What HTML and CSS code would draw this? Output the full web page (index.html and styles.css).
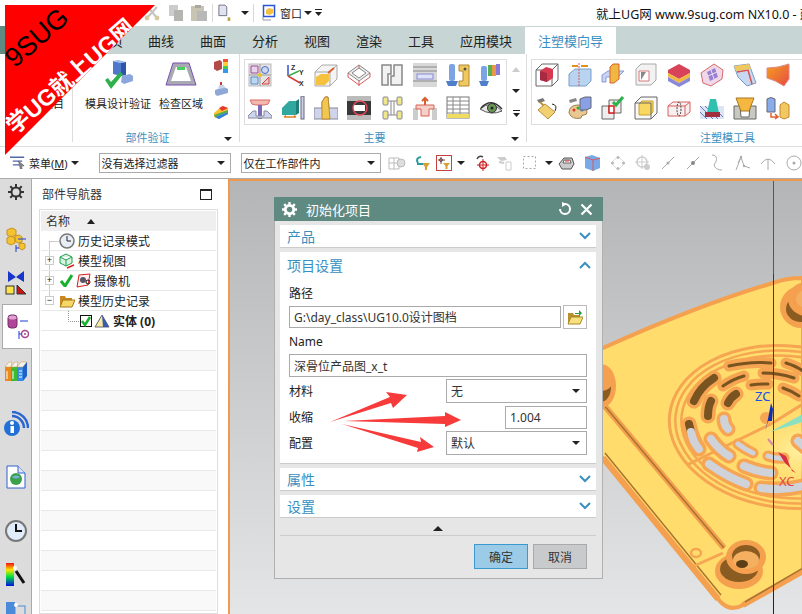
FILE: index.html
```html
<!DOCTYPE html>
<html lang="zh">
<head>
<meta charset="UTF-8">
<title>NX10.0</title>
<link rel="stylesheet" href="styles.css">
</head>
<body>
<div class="app">

<!-- quick access bar -->
<div class="topbar">
	<div class="quick">
		<svg class="qi scissors" width="18" height="18" viewBox="0 0 18 18"><path d="M3 15 14 3M5 3l9 11" stroke="#c4c4c0" stroke-width="2" fill="none"/><circle cx="4" cy="14" r="2.4" fill="#d8c8a0"/><circle cx="14" cy="14" r="2.4" fill="#d8c8a0"/></svg>
		<svg class="qi copy" width="16" height="18" viewBox="0 0 16 18"><rect x="1" y="1" width="9" height="11" fill="#ccc"/><rect x="6" y="6" width="9" height="11" fill="#b4b4b0"/></svg>
		<svg class="qi paste" width="18" height="18" viewBox="0 0 18 18"><rect x="1" y="2" width="13" height="15" fill="#c8c4b4"/><rect x="5" y="1" width="6" height="3" fill="#a8a8a0"/><rect x="7" y="7" width="10" height="10" fill="#b8b8b8"/></svg>
		<i class="qsep"></i>
		<svg class="qi doc" width="14" height="20" viewBox="0 0 16 20"><path d="M1 1h7l2 2v10H1z" fill="#dfe4f0" stroke="#667"/><path d="M11 15h3v4h-3z" fill="#b9a23c"/></svg>
		<i class="arrow dn"></i>
		<i class="qsep"></i>
		<svg class="qi win" width="18" height="18" viewBox="0 0 18 18"><rect x="2.500" y="1.500" width="11" height="11" fill="#fff" stroke="#2a55d8" stroke-width="1.500"/><path d="M5 6l3-2 4 1v4l-3 2-4-1z" fill="#f4c040"/><path d="M2 13v3h8" stroke="#999" fill="none"/></svg>
		<span class="qtext">窗口</span>
		<i class="arrow dn"></i>
		<svg class="qi more" width="7" height="8" viewBox="0 0 7 8"><path d="M0 0h7v1H0zM0 3h7L3.500 7z" fill="#222"/></svg>
	</div>
	<div class="apptitle">就上UG网 www.9sug.com NX10.0 - 建模</div>
</div>

<!-- ribbon tabs -->
<div class="tabs">
	<span class="tab tab-file"></span>
	<span class="tab tab-hidden">主页</span>
	<span class="tab">曲线</span>
	<span class="tab">曲面</span>
	<span class="tab">分析</span>
	<span class="tab">视图</span>
	<span class="tab">渲染</span>
	<span class="tab">工具</span>
	<span class="tab tab-apps">应用模块</span>
	<span class="tab active">注塑模向导</span>
</div>

<!-- ribbon -->
<div class="ribbon">
	<div class="rgroup rg-first">
		<div class="rbig-cut">初始化项目</div>
	</div>
	<div class="rgroup rg-check">
		<div class="rcontent">
			<div class="rbig">
				<svg width="32" height="32" viewBox="0 0 32 32"><path d="M11 2l8 2v13l-8-2z" fill="#4f78cc"/><path d="M11 2l5-1 8 2-5 1z" fill="#9ab8ea"/><path d="M19 4l5-1v13l-5 1z" fill="#2f55a8"/><path d="M20 17l8-2 3 2v5l-9 3-3-2z" fill="#8aa6dc"/><path d="M3 21l3-2 3 4L18 13l3 2L9 30z" fill="#2eb14a"/></svg>
				<span>模具设计验证</span>
			</div>
			<div class="rbig">
				<svg width="32" height="32" viewBox="0 0 32 32"><path d="M8 4h16l7 22H1z" fill="#a9a9b4" stroke="#7a4fb0"/><path d="M11 8h10l5 14H6z" fill="#fff"/><path d="M12 8h8v3h-8z" fill="#46d15a"/></svg>
				<span>检查区域</span>
			</div>
			<div class="rsmall">
				<svg width="16" height="16" viewBox="0 0 16 16"><path d="M1 4l6-2 2 2v7l-5 2-3-2z" fill="#b34a4a"/><rect x="10" y="1" width="5" height="3" fill="#e53"/><rect x="10" y="4" width="5" height="4" fill="#fc3"/><rect x="10" y="8" width="5" height="3" fill="#4c4"/><rect x="10" y="11" width="5" height="4" fill="#39e"/></svg>
				<svg width="16" height="16" viewBox="0 0 16 16"><path d="M2 9l9-3 4 2v4l-11 3-2-2z" fill="#8ea8d8"/><path d="M5 8l1-4h5l1 3z" fill="#c6d4ea"/><path d="M8 1v3" stroke="#c33" stroke-width="2"/></svg>
				<svg width="16" height="16" viewBox="0 0 16 16"><path d="M1 9l8-7 6 2v6l-9 5-5-2z" fill="#fbc02d"/><path d="M1 11l14-5v2L2 13z" fill="#4caf50"/><path d="M2 13l13-5v2l-9 5z" fill="#2f7fe0"/><path d="M6 4l4-2 5 2-6 3z" fill="#e53935"/></svg>
			</div>
		</div>
		<div class="rlabel">部件验证<i class="arrow dn glabel-arrow"></i></div>
	</div>

	<div class="rgroup rg-main">
		<div class="rcontent">
			<div class="igrid">
				<svg class="ic" viewBox="0 0 24 24"><rect x="1" y="1" width="22" height="22" fill="#e4e4e4" stroke="#bbb"/><path d="M3 3h7v7H3z" fill="#e8d4ea" stroke="#a04a9a"/><circle cx="17" cy="7" r="3.500" fill="#cdd8f0" stroke="#4a6ac8"/><path d="M3 14h7v7H3z" fill="#bcd8f0" stroke="#5a8ac8"/><path d="M21 14v7h-7z" fill="#f4c8c0" stroke="#c44"/><path d="M12 1v22M1 12h22" stroke="#999"/><circle cx="12" cy="12" r="2" fill="#e8c820"/></svg>
				<svg class="ic" viewBox="0 0 24 24"><path d="M7 13V2" stroke="#3a4fd0" stroke-width="1.500"/><path d="M7 13l11-5" stroke="#3ab04a" stroke-width="1.500"/><path d="M7 13l12 7" stroke="#d04040" stroke-width="1.500"/><text x="10" y="7" class="axis">Z</text><text x="18" y="12" class="axis">Y</text><text x="18" y="23" class="axis">X</text></svg>
				<svg class="ic" viewBox="0 0 24 24"><path d="M1 9l7-7h15v14l-7 7H1z" fill="#f4f4f4" stroke="#aaa"/><path d="M1 9h15v14M16 9l7-7" fill="none" stroke="#aaa"/><path d="M2 14l5-3h8v7l-4 4H2z" fill="#f6c23e"/><path d="M14 10l6-5" stroke="#d86030" stroke-width="2"/></svg>
				<svg class="ic" viewBox="0 0 24 24"><path d="M1 10l11-8 11 8-11 8z" fill="#eee" stroke="#888"/><path d="M5 10l7-5 7 5-7 5z" fill="#fff" stroke="#888"/><path d="M1 10v4l11 8 11-8v-4" fill="none" stroke="#d85a5a"/><path d="M12 2v3M12 18v5" stroke="#d85a5a"/></svg>
				<svg class="ic" viewBox="0 0 24 24"><path d="M2 2h9v9H8v11H2zM14 2h8v20H11v-9h3z" fill="#f2f2f2" stroke="#888" stroke-width="1.500"/></svg>
				<svg class="ic" viewBox="0 0 24 24"><rect width="24" height="24" fill="#d8d8d8"/><path d="M0 4h24M0 8h24M0 18h24" stroke="#888"/><rect x="4" y="11" width="16" height="5" fill="#dde4f8" stroke="#8a8ad8"/></svg>
				<svg class="ic" viewBox="0 0 24 24"><rect x="3" y="1" width="6" height="17" rx="2" fill="#7ca4e4"/><path d="M0 18h12l-2 5H2z" fill="#4f7fc8"/><path d="M13 2h10v21H13v-5h4V8h-4z" fill="#f0c860" stroke="#b08830"/><circle cx="19" cy="6" r="1.500" fill="#554"/></svg>
				<svg class="ic" viewBox="0 0 24 24"><rect x="2" y="3" width="6" height="15" rx="2" fill="#7ca4e4"/><path d="M0 18h10l-2 5H2z" fill="#4f7fc8"/><rect x="9" y="2" width="4" height="11" fill="#58b050"/><rect x="13" y="2" width="4" height="11" fill="#e89848"/><rect x="17" y="1" width="4" height="11" fill="#8a7ad8"/></svg>
				<svg class="ic" viewBox="0 0 24 24"><path d="M2 4h20l-2 4-4 1H8L4 8z" fill="#f4b8b0" stroke="#d86a60"/><path d="M10 9h4v14h-4z" fill="#7a6ab8"/><path d="M0 20l5-5h3v5h8v-5h3l5 5v2H0z" fill="#cdd4ee" stroke="#889"/></svg>
				<svg class="ic" viewBox="0 0 24 24"><path d="M1 12l7-7h7v14H1z" fill="#30a8a0"/><path d="M15 5l3-2v14l-3 2z" fill="#1f7f78"/><path d="M3 21h12M3 21l2-1.500M15 21l-2-1.500" stroke="#e08020" stroke-width="1.500" fill="none"/><rect x="20" y="0" width="3" height="23" fill="#cdd0e8" stroke="#667"/></svg>
				<svg class="ic" viewBox="0 0 24 24"><path d="M0 12h8V6l3-5h3l1 11h9v11H0z" fill="#cfd4ea" stroke="#889"/><path d="M8 23V6l3-5h3l2 22z" fill="#f0c850" stroke="#c08830"/></svg>
				<svg class="ic" viewBox="0 0 24 24"><rect width="24" height="24" fill="#383838"/><rect x="0" y="0" width="24" height="5" fill="#bbb"/><rect x="0" y="19" width="24" height="5" fill="#bbb"/><path d="M6 9h12v6H6z" fill="#fff"/><circle cx="13" cy="12" r="7" fill="none" stroke="#e04a5a" stroke-width="1.500"/></svg>
				<svg class="ic" viewBox="0 0 24 24"><rect x="3" y="1" width="5" height="8" rx="1" fill="#f0e68c" stroke="#889"/><rect x="17" y="1" width="5" height="8" rx="1" fill="#f0e68c" stroke="#889"/><rect x="3" y="15" width="5" height="8" rx="1" fill="#f0e68c" stroke="#889"/><rect x="17" y="15" width="5" height="8" rx="1" fill="#f0e68c" stroke="#889"/><path d="M8 5h9M8 19h9M11 5v14M14 5v14" stroke="#888" fill="none"/></svg>
				<svg class="ic" viewBox="0 0 24 24"><path d="M0 12h5v12h14V12h5v12H0z" fill="#ccc"/><path d="M3 9h18v4h-5v7H8v-7H3z" fill="#f4d0c8" stroke="#d86050"/><path d="M12 9V2M9 5l3-3 3 3" stroke="#d86030" stroke-width="2" fill="none"/></svg>
				<svg class="ic" viewBox="0 0 24 24"><rect x="1" y="1" width="22" height="21" fill="#fff" stroke="#777"/><path d="M1 5h22M1 9h22M1 13h22M1 17h22M7 1v21M14 1v21" stroke="#888"/><rect x="1" y="18" width="22" height="4" fill="#f0dc60"/></svg>
				<svg class="ic" viewBox="0 0 24 24"><path d="M1 13Q12 3 23 15 12 20 1 13z" fill="#e8e8e8" stroke="#555"/><circle cx="13" cy="12" r="4.500" fill="#6a9a50" stroke="#334"/><circle cx="13" cy="12" r="1.500" fill="#223"/><path d="M2 12Q12 1 23 13" stroke="#333" fill="none" stroke-width="1.500"/></svg>
			</div>
			<div class="rscroll">
				<i class="arrow up pale"></i>
				<i class="arrow dn"></i>
				<svg width="7" height="8" viewBox="0 0 7 8"><path d="M0 0h7v1H0zM0 3h7L3.500 7z" fill="#222"/></svg>
			</div>
		</div>
		<div class="rlabel">主要<i class="arrow dn glabel-arrow"></i></div>
	</div>

	<div class="rgroup rg-tool">
		<div class="rcontent">
			<div class="igrid">
				<svg class="ic" viewBox="0 0 24 24"><path d="M1 7l6-6h16v16l-6 6H1z" fill="#fff" stroke="#666"/><path d="M1 7h16v16M17 7l6-6" fill="none" stroke="#666"/><path d="M5 8l6-4 7 2v9l-6 4-7-2z" fill="#d63a50"/><path d="M5 8l7 2v9l-7-2z" fill="#a82a40"/></svg>
				<svg class="ic" viewBox="0 0 24 24"><path d="M1 11l6-5h16v12l-5 5H1z" fill="#b8d4f0" stroke="#7aa0c8"/><path d="M11 0v24" stroke="#d85a5a" stroke-dasharray="2 1"/><path d="M4 3h6M13 3h7" stroke="#e09020" stroke-width="2"/></svg>
				<svg class="ic" viewBox="0 0 24 24"><path d="M1 12l6-4h16l-6 6H5v5H1z" fill="#c8d4f4" stroke="#8a9ad8"/><path d="M9 4l3-3h6v15l-5 4H9z" fill="#f0b840" stroke="#d86030"/></svg>
				<svg class="ic" viewBox="0 0 24 24"><path d="M2 6l5-5h15v16l-5 5H2z" fill="#f2f2f2" stroke="#aaa"/><path d="M5 8h10v10H5z" fill="#fff" stroke="#d87a7a"/><path d="M7 17V9h5z" fill="#888"/></svg>
				<svg class="ic" viewBox="0 0 24 24"><path d="M1 7l11-6 11 6v3L12 16 1 10z" fill="#d8435a"/><path d="M1 10v4l11 6 11-6v-4L12 16z" fill="#f2b840"/><path d="M1 14v4l11 6 11-6v-4l-11 6z" fill="#8a88d8"/></svg>
				<svg class="ic" viewBox="0 0 24 24"><path d="M1 10L14 1l9 6-1 9-11 7-8-3z" fill="#f0d8e8" stroke="#d86a6a"/><path d="M7 9l8-4 3 9-8 4z" fill="#9a80d0"/><path d="M11 7l3 9M8 13l9-4" stroke="#e8e0f4"/></svg>
				<svg class="ic" viewBox="0 0 24 24"><path d="M1 3l15-2 7 19-9 3-9-9z" fill="#c8d8f0" stroke="#7a9ac8"/><path d="M4 9l11-2 4 14" stroke="#d85050" fill="none" stroke-width="1.500"/><path d="M1 3l15-2 2 5L3 8z" fill="#f0c860"/></svg>
				<svg class="ic" viewBox="0 0 24 24"><defs><linearGradient id="fa" x1="0" y1="0" x2="1" y2="1"><stop offset="0" stop-color="#f4a020"/><stop offset="1" stop-color="#e84a40"/></linearGradient></defs><path d="M1 5Q12 5 23 1v15q-3 4-5 7Q9 17 1 15z" fill="url(#fa)" stroke="#d88"/></svg>
				<svg class="ic" viewBox="0 0 24 24"><path d="M2 4l6-2 2 3-6 2z" fill="#777"/><path d="M5 6l5 5" stroke="#b89040" stroke-width="2"/><path d="M3 14l7-6 10 8-7 7z" fill="#f0d070" stroke="#b89040"/><path d="M17 8q6 1 3 7" stroke="#222" fill="none"/></svg>
				<svg class="ic" viewBox="0 0 24 24"><path d="M1 17q0-8 9-8t9 7q0 3-3 3-3 0-3 3-9 2-12-5z" fill="#e8c890" stroke="#a08050"/><circle cx="6" cy="14" r="1.500" fill="#d33"/><circle cx="10" cy="12" r="1.500" fill="#3a3"/><circle cx="14" cy="14" r="1.500" fill="#38d"/><path d="M12 3l5-2h6v11l-5 2h-6z" fill="#8aa0e4" stroke="#667"/><path d="M1 4l7-2 1 3-7 2z" fill="#888"/></svg>
				<svg class="ic" viewBox="0 0 24 24"><path d="M1 10h12v13H1z" fill="#eee" stroke="#666"/><path d="M8 4h12v13H8z" fill="#eee" stroke="#666"/><path d="M8 10h5v7H8z" fill="#fff" stroke="#d82020" stroke-width="1.500"/><path d="M12 6l3 3 7-8" stroke="#2eb14a" stroke-width="3" fill="none"/></svg>
				<svg class="ic" viewBox="0 0 24 24"><path d="M1 7l6-6h16v16l-6 6H1z" fill="#f8f8f8" stroke="#666"/><path d="M5 8l3-3h11v11l-3 3H5z" fill="#f8d860" stroke="#c8a030"/><path d="M1 7h16v16" fill="none" stroke="#666"/></svg>
				<svg class="ic" viewBox="0 0 24 24"><path d="M1 10l5-4h17v10l-5 4H1z" fill="#f8f0f0" stroke="#d86060"/><path d="M1 10h17v10M18 10l5-4" fill="none" stroke="#d86060"/><ellipse cx="12" cy="13" rx="2" ry="7" fill="none" stroke="#444" stroke-dasharray="2 1"/></svg>
				<svg class="ic" viewBox="0 0 24 24"><path d="M0 10h24v13H0z" fill="#dde4f4"/><path d="M0 10l13 13M5 10l13 13M12 10l11 11M0 16l7 7" stroke="#6a7ac0"/><path d="M10 3h6l3 14H7z" fill="#30c0b0"/><rect x="5" y="16" width="15" height="5" fill="#a03040"/></svg>
				<svg class="ic" viewBox="0 0 24 24"><path d="M1 10h6l1 11h8l1-11h6v13H1z" fill="#c8c8c0" stroke="#666"/><path d="M3 2h18l-5 13H8z" fill="#f4b840" stroke="#a87820"/></svg>
				<svg class="ic" viewBox="0 0 24 24"><path d="M1 3q4-3 8 0v13H1z" fill="#8aace8" stroke="#667"/><path d="M14 9l4-3 5 3v12l-5 2-4-2z" fill="#f4c860" stroke="#c08830"/><path d="M5 17v4h7M9 18l3 3-3 2" stroke="#e06030" fill="none" stroke-width="1.500"/></svg>
			</div>
		</div>
		<div class="rlabel">注塑模工具</div>
	</div>
</div>

<!-- selection bar -->
<div class="selbar">
	<div class="menu-btn">
		<svg width="16" height="13" viewBox="0 0 17 13"><path d="M0 1h15M3 5h10M3 9h7" stroke="#56a" stroke-width="1.500"/><path d="M9 5l6 5-3 .5 1 2.500-2 .5z" fill="#888" stroke="#444" stroke-width=".5"/></svg>
		<span>菜单(<u>M</u>)</span>
		<i class="arrow dn"></i>
	</div>
	<i class="bar-sep"></i>
	<div class="combo combo-filter"><span>没有选择过滤器</span><i class="arrow dn"></i></div>
	<div class="combo combo-scope"><span>仅在工作部件内</span><i class="arrow dn"></i></div>
	<div class="bar-icons">
		<svg width="18" height="16" viewBox="0 0 18 16"><path d="M1 3h10v11H1zM1 8h10M6 3v11" stroke="#bbb" fill="none"/><circle cx="13" cy="8" r="4" fill="#ddd" stroke="#bbb"/></svg>
		<svg width="17" height="16" viewBox="0 0 17 16"><path d="M4 8Q1 3 7 2" stroke="#2a9a9a" stroke-width="2" fill="none"/><path d="M8 8h8l-3 4v3h-2v-3z" fill="#d8a030"/><path d="M3 9h6" stroke="#2a9a9a" stroke-width="2"/></svg>
		<span class="bi-active"><svg width="14" height="13" viewBox="0 0 14 13"><path d="M4 1v7M1 4h7" stroke="#933"/><circle cx="4" cy="4" r="1.500" fill="none" stroke="#555"/><path d="M6 7h7l-2.500 3v3h-2v-3z" fill="#d8a030"/></svg></span>
		<i class="arrow dn"></i>
		<svg width="16" height="18" viewBox="0 0 16 18"><path d="M3 5Q5 1 9 3" stroke="#444" stroke-width="1.500" fill="none"/><circle cx="9" cy="11" r="3.500" fill="none" stroke="#d02020" stroke-width="1.500"/><path d="M9 5v12M3 11h12" stroke="#d02020"/></svg>
		<svg width="17" height="16" viewBox="0 0 17 16"><path d="M1 2h8l2 3-6 1z" fill="#ccc"/><path d="M10 7h5v8h-5z" fill="none" stroke="#ccc"/><path d="M3 7l5 1" stroke="#ccc" stroke-width="2"/></svg>
		<svg width="13" height="13" viewBox="0 0 13 13"><rect x=".5" y=".5" width="12" height="12" fill="none" stroke="#aaa" stroke-dasharray="2 2"/></svg>
		<i class="arrow dn"></i>
		<svg width="17" height="16" viewBox="0 0 17 16"><path d="M1 9l5-6h8l2 6-3 5H4z" fill="#ccc" stroke="#555"/><path d="M6 5h6l1 3H5z" fill="#fff" stroke="#666"/><path d="M7 6h4" stroke="#d33"/></svg>
		<svg width="17" height="17" viewBox="0 0 17 17"><path d="M1 3l7-2 8 3v10l-7 3-8-3z" fill="#7aa8e8"/><path d="M1 3l8 3v11" fill="none" stroke="#d85a5a"/><path d="M9 6l7-2" stroke="#d85a5a"/></svg>
		<svg width="16" height="16" viewBox="0 0 16 16"><path d="M8 1l7 7-7 7-7-7z" fill="none" stroke="#ddd"/><circle cx="8" cy="2.500" r="1.500" fill="#bbb"/><circle cx="8" cy="13.500" r="1.500" fill="#bbb"/><circle cx="2.500" cy="8" r="1.500" fill="#bbb"/><circle cx="13.500" cy="8" r="1.500" fill="#bbb"/></svg>
		<svg width="16" height="16" viewBox="0 0 16 16"><circle cx="7" cy="7" r="5" fill="none" stroke="#ccc" stroke-width="1.500"/><path d="M7 0v14M0 7h14" stroke="#ccc"/><circle cx="12" cy="12" r="3" fill="#ccc"/></svg>
		<svg width="14" height="14" viewBox="0 0 14 14"><path d="M1 13 13 1" stroke="#aaa"/><circle cx="7" cy="7" r="1.500" fill="#aaa"/></svg>
		<svg width="14" height="14" viewBox="0 0 14 14"><path d="M1 13 13 1" stroke="#aaa"/><circle cx="7" cy="7" r="2" fill="#888"/></svg>
		<svg width="14" height="17" viewBox="0 0 14 17"><path d="M2 1c6 0 5 6 3 8s0 7 7 7" stroke="#aaa" fill="none"/></svg>
		<svg width="16" height="16" viewBox="0 0 16 16"><path d="M1 15 6 2l3 9 6 2M6 2l-3 6" stroke="#aaa" fill="none"/><circle cx="6" cy="2" r="1.200" fill="#aaa"/><circle cx="9" cy="11" r="1.200" fill="#aaa"/></svg>
		<svg width="16" height="16" viewBox="0 0 16 16"><path d="M1 9Q8-1 15 9M8 4v11" stroke="#aaa" fill="none"/></svg>
		<svg width="16" height="16" viewBox="0 0 16 16"><circle cx="8" cy="8" r="7" fill="none" stroke="#aaa"/><circle cx="8" cy="8" r="1.500" fill="#aaa"/></svg>
	</div>
</div>

<div class="main">
	<!-- resource bar -->
	<div class="rail">
		<div class="rail-item"><svg width="16" height="16" viewBox="0 0 16 16"><circle cx="8" cy="8" r="4.500" fill="none" stroke="#333" stroke-width="2"/><path d="M8 0v3M8 13v3M0 8h3M13 8h3M2.300 2.300l2 2M11.700 11.700l2 2M2.300 13.700l2-2M11.700 4.300l2-2" stroke="#333" stroke-width="2"/></svg></div>
		<div class="rail-item"><svg width="22" height="26" viewBox="0 0 22 26"><path d="M2 3l5-2 4 2v5l-5 2-4-2z" fill="#f4c430" stroke="#c89020"/><path d="M2 11l4-2 4 2v5l-4 2-4-2zM10 9l4-1 3 2v5l-4 1-3-2z" fill="#f4c430" stroke="#c89020"/><path d="M14 17l3-1 3 1v4l-3 2-3-2z" fill="#f4c430" stroke="#c89020"/><path d="M11 18v7M11 21h3M13 12h8" stroke="#1a3ad8" fill="none"/></svg></div>
		<div class="rail-item"><svg width="22" height="24" viewBox="0 0 22 24"><path d="M3 0l8 6 8-6v11l-8-5-8 5z" fill="#1836c8"/><rect x="1" y="15" width="8" height="8" fill="#ffe34d" stroke="#333"/><path d="M12 14l9 9h-9z" fill="#d01414" stroke="#333"/></svg></div>
		<div class="rail-item on"><svg width="22" height="26" viewBox="0 0 22 26"><rect x="1" y="1" width="9" height="13" rx="3" fill="#b2459a" stroke="#70306a"/><ellipse cx="5.500" cy="3.500" rx="4" ry="2" fill="#e0a0d0"/><path d="M13 7h8M12 17v8M12 20h3" stroke="#1a3ad8" fill="none"/><circle cx="18" cy="20" r="3.500" fill="none" stroke="#a84590" stroke-width="1.500"/><circle cx="18" cy="20" r="1" fill="#a84590"/></svg></div>
		<div class="rail-item"><svg width="24" height="22" viewBox="0 0 24 22"><path d="M1 7h6v14H1z" fill="#e98a1a"/><path d="M7 7h6v14H7z" fill="#3cba34"/><path d="M13 7h6v14h-6z" fill="#3a8ae8"/><path d="M1 7l4-5h3L7 7zM7 7l4-5h3l-1 5zM13 7l4-5h6l-4 5z" fill="#f4f4ec" stroke="#c89040" stroke-width=".5"/><path d="M19 7l4-5v14l-4 5z" fill="#2060c8"/><path d="M3 11v8M9 11v8M15 11h3M15 14h3M15 17h3" stroke="#fff"/></svg></div>
		<div class="rail-item"><svg width="26" height="26" viewBox="0 0 26 26"><circle cx="9" cy="17" r="8" fill="#2070d8"/><rect x="7.500" y="15" width="3.500" height="7" fill="#fff"/><circle cx="9" cy="12" r="2" fill="#fff"/><path d="M9 5a12 12 0 0 1 12 12M9 1a16 16 0 0 1 16 16" stroke="#2a66d0" stroke-width="2.500" fill="none"/></svg></div>
		<div class="rail-item"><svg width="20" height="24" viewBox="0 0 20 24"><path d="M1 1h11l7 7v15H1z" fill="#fff" stroke="#3060d0"/><path d="M12 1v7h7" fill="#dce4f4" stroke="#3060d0"/><circle cx="10" cy="14" r="6" fill="#3aa04a"/><path d="M6 12a5 4 0 0 1 8 0q-4 3-8 0z" fill="#7ab0e0"/></svg></div>
		<div class="rail-item"><svg width="22" height="22" viewBox="0 0 22 22"><circle cx="11" cy="11" r="10" fill="#e0ecfa" stroke="#777" stroke-width="2"/><path d="M11 4v7h6" stroke="#111" stroke-width="2" fill="none"/></svg></div>
		<div class="rail-item"><svg width="22" height="24" viewBox="0 0 22 24"><defs><linearGradient id="spec" x1="0" y1="0" x2="0" y2="1"><stop offset="0" stop-color="#f01010"/><stop offset=".3" stop-color="#f8e800"/><stop offset=".6" stop-color="#00e040"/><stop offset="1" stop-color="#0010e0"/></linearGradient></defs><rect x="1" y="0" width="8" height="23" fill="url(#spec)"/><path d="M11 8l8 12" stroke="#111" stroke-width="3"/><circle cx="10" cy="5" r="2" fill="#fff"/></svg></div>
		<div class="rail-item"><svg width="22" height="24" viewBox="0 0 22 24"><rect x="1" y="2" width="9" height="12" fill="#4a8ad8"/><rect x="10" y="6" width="10" height="18" fill="none" stroke="#4a8ad8"/><circle cx="11" cy="5" r="2" fill="#fff"/></svg></div>
	</div>

	<!-- part navigator -->
	<div class="nav">
		<div class="nav-head">
			<span>部件导航器</span>
			<i class="maxbox"></i>
		</div>
		<div class="tree">
			<div class="tree-head"><span>名称</span><i class="arrow up"></i></div>
			<div class="tree-body">
				<svg class="tree-lines" width="60" height="100" viewBox="0 0 60 100"><path d="M8.500 10.500V70M8.500 10.500H18M27.500 80V90.500H38" stroke="#999" stroke-dasharray="1 1" fill="none"/></svg>
				<div class="row"><i class="twist none"></i><svg class="ti" width="16" height="16" viewBox="0 0 16 16"><circle cx="8" cy="8" r="7" fill="#e8eef6" stroke="#777" stroke-width="1.500"/><path d="M8 3v5h4" stroke="#222" fill="none"/></svg><span>历史记录模式</span></div>
				<div class="row"><i class="twist">+</i><svg class="ti" width="16" height="16" viewBox="0 0 16 16"><path d="M7 1l6 3v6l-6 3-6-3V4zM1 4l6 3 6-3M7 7v6" fill="#d8f4e0" stroke="#20a050"/><path d="M8 15l7-3" stroke="#e02020" stroke-width="1.500"/></svg><span>模型视图</span></div>
				<div class="row"><i class="twist">+</i><svg class="tchk" width="13" height="13" viewBox="0 0 13 13"><path d="M1 7l4 5 7-11" stroke="#18b030" stroke-width="3" fill="none"/></svg><svg class="tcam" width="15" height="15" viewBox="0 0 15 15"><path d="M3 2l11-1-2 11-11 2z" fill="#fff0f0" stroke="#d02020"/><circle cx="7" cy="7" r="3" fill="#556"/><circle cx="12" cy="9" r="2" fill="none" stroke="#111"/></svg><span>摄像机</span></div>
				<div class="row"><i class="twist">−</i><svg class="ti" width="16" height="16" viewBox="0 0 16 16"><path d="M1 3h5l1 2h6v2H4l-3 7z" fill="#c88a20"/><path d="M1 14l3-7h12l-3 7z" fill="#f6d868" stroke="#a87818"/></svg><span>模型历史记录</span></div>
				<div class="row row-solid"><svg class="tbox" width="12" height="12" viewBox="0 0 12 12"><rect x=".5" y=".5" width="11" height="11" fill="#fff" stroke="#111"/><path d="M2 6l3 4 5-8" stroke="#18b030" stroke-width="2.500" fill="none"/></svg><svg class="tsolid" width="16" height="14" viewBox="0 0 16 14"><path d="M8 1l7 12H1z" fill="#f8e8a0" stroke="#667"/><path d="M8 1l7 12H9z" fill="#3a5ab0"/></svg><b>实体 (0)</b></div>
				<div class="row"></div><div class="row"></div><div class="row"></div><div class="row"></div>
				<div class="row"></div><div class="row"></div><div class="row"></div><div class="row"></div>
				<div class="row"></div><div class="row"></div><div class="row"></div><div class="row"></div>
				<div class="row"></div><div class="row"></div>
			</div>
		</div>
	</div>

	<!-- graphics window -->
	<div class="view">
		<svg class="model" width="573" height="434" viewBox="229 180 573 434">
			<defs>
				<radialGradient id="glow"><stop offset="0" stop-color="#fff0a0"/><stop offset="1" stop-color="#ffdc6c" stop-opacity="0"/></radialGradient>
				<path id="slots-wide" d="M693 400Q699 386 713 377M707 415Q707 406 710 400M727 402Q730 396 735 393M688 423Q691 438 698 448M710 438Q718 449 728 455M723 418Q723 424 727 428M708 463Q726 476 745 483M743 465Q757 471 770 472M760 487Q782 490 802 485M797 440L804 446"/>
				<path id="slots-thin" d="M722 385Q732 378 743 375M728 365Q750 360 770 362M762 372Q778 372 793 377M750 384Q758 383 767 383M782 387Q791 390 798 395M785 362Q795 365 802 370"/>
				<path id="slots-thin-gray" d="M737 443Q745 449 752 452M767 455Q775 458 783 457"/>
				<path id="slots-gray-wide" d="M690 431Q692 441 698 448M710 438Q718 449 728 455M723 418Q723 424 727 428M708 463Q726 476 745 483M743 465Q757 471 770 472M760 487Q782 490 802 485M797 440L804 446"/>
			</defs>
			<path class="plate" d="M560 368L602 347Q700 303 772 282Q785 277 802 277V570L742 604Q728 612 717 598L600 455Z"/>
			<ellipse cx="797" cy="450" rx="55" ry="45" fill="url(#glow)"/>
			<path class="band" d="M602 403L723 547M602 457L717 598M742 604L802 570"/>
			<path class="band-line" d="M602 403L723 547M604 452L720 594M744 601L802 567"/>
			<!-- ribs -->
			<ellipse class="rib" cx="787" cy="426" rx="119" ry="81" transform="rotate(6 787 426)"/>
			<ellipse class="rib thin" cx="787" cy="426" rx="113" ry="76" transform="rotate(6 787 426)"/>
			<ellipse class="rib thin" cx="787" cy="426" rx="107" ry="71" transform="rotate(6 787 426)"/>
			<path class="rib" d="M686 464L770 423L802 403"/>
			<circle class="rib-blob" cx="765" cy="417" r="6"/>
			<use href="#slots-wide" class="slot-rim wide"/>
			<use href="#slots-thin" class="slot-rim"/>
			<use href="#slots-thin-gray" class="slot-rim"/>
			<path class="slot-dark wide" d="M693 400Q699 386 713 377M707 415Q707 406 710 400M727 402Q730 396 735 393M688 423L690 431"/>
			<use href="#slots-thin" class="slot-dark"/>
			<use href="#slots-gray-wide" class="slot-gray"/>
			<use href="#slots-thin-gray" class="slot-gray thin"/>
			<!-- bosses -->
			<g class="boss">
				<ellipse class="rim" cx="738" cy="570" rx="24" ry="18"/>
				<ellipse class="side" cx="738" cy="568" rx="19" ry="13"/>
				<ellipse class="rim" cx="745" cy="556" rx="20" ry="17"/>
				<ellipse class="side" cx="745" cy="555" rx="14" ry="11"/>
				<ellipse class="top" cx="745" cy="559" rx="13" ry="9"/>
				<ellipse class="well" cx="741" cy="563" rx="6" ry="4"/>
			</g>
			<g class="boss">
				<ellipse class="rim" cx="800" cy="306" rx="21" ry="21"/>
				<ellipse class="side" cx="800" cy="308" rx="15" ry="13"/>
				<ellipse class="rim" cx="806" cy="298" rx="19" ry="17"/>
				<ellipse class="top" cx="806" cy="298" rx="11" ry="9"/>
			</g>
			<g class="boss">
				<ellipse class="rim" cx="600" cy="385" rx="15" ry="22"/>
				<ellipse class="side" cx="600" cy="386" rx="10" ry="15"/>
				<ellipse class="rim" cx="600" cy="377" rx="13" ry="13"/>
			</g>
			<ellipse class="rib thin" cx="695" cy="552" rx="5" ry="4"/>
			<path class="rib" d="M693 565L722 552"/>
			<!-- datum line and WCS -->
			<path class="datum" d="M772.500 180V230" stroke="#485c58"/>
			<path class="datum" d="M772.500 230V255" stroke="#5c5058"/>
			<path class="datum" d="M772.500 255V273" stroke="#6a5a20"/>
			<path class="datum" d="M772.500 273V282" stroke="#7a2010"/>
			<path class="datum" d="M772.500 282V585" stroke="#1a3aa8"/>
			<path class="datum" d="M772.500 585V614" stroke="#4a1410"/>
			<path d="M764 431L767 418 770 402 772 408 771 420 767 420z" fill="#0f2fb4"/>
			<path d="M769 431L802 413V421z" fill="#8ae0c0"/>
			<path d="M767 438L772 444" stroke="#d88aa8" stroke-width="2"/>
			<path d="M777 451L785 455 791 470 795 472 784 462z" fill="#d83040"/>
			<text class="wcs wcs-z" x="754" y="400">ZC</text>
			<text class="wcs wcs-x" x="778" y="485">XC</text>
		</svg>
	</div>
</div>

<!-- floating dialog -->
<div class="dialog">
	<div class="dlg-title">
		<svg width="15" height="15" viewBox="0 0 16 16"><circle cx="8" cy="8" r="4.500" fill="none" stroke="#fff" stroke-width="3"/><path d="M8 0v3M8 13v3M0 8h3M13 8h3M2.300 2.300l2 2M11.700 11.700l2 2M2.300 13.700l2-2M11.700 4.300l2-2" stroke="#fff" stroke-width="2.500"/></svg>
		<span>初始化项目</span>
		<svg class="t-reset" width="14" height="14" viewBox="0 0 14 14"><path d="M7 2a5 5 0 1 1-5 5" stroke="#fff" stroke-width="2" fill="none"/><path d="M4 0l5 2-5 3z" fill="#fff"/></svg>
		<svg width="13" height="13" viewBox="0 0 13 13"><path d="M1.500 1.500l10 10M11.500 1.500l-10 10" stroke="#fff" stroke-width="2.200"/></svg>
	</div>
	<div class="dlg-body">
		<div class="sec">
			<div class="sec-head"><span>产品</span><svg class="chev" width="12" height="8" viewBox="0 0 12 8"><path d="M1 1l5 5 5-5" stroke="#3a8fc0" stroke-width="2" fill="none"/></svg></div>
		</div>
		<div class="sec sec-open">
			<div class="sec-head tall"><span>项目设置</span><svg class="chev" width="12" height="8" viewBox="0 0 12 8"><path d="M1 7l5-5 5 5" stroke="#3a8fc0" stroke-width="2" fill="none"/></svg></div>
			<div class="form">
				<label class="lbl first">路径</label>
				<div class="path-row">
					<div class="input grow">G:\day_class\UG10.0设计图档</div>
					<div class="browse"><svg width="16" height="15" viewBox="0 0 16 15"><path d="M1 3h5l1 2h6v2H4l-3 7z" fill="#b89030"/><path d="M1 14l3-7h12l-3 7z" fill="#f6e080" stroke="#a88820"/><path d="M8 3h4V0l3 3-3 3V4H8z" fill="#2a9a3a"/></svg></div>
				</div>
				<label class="lbl">Name</label>
				<div class="input name">深骨位产品图_x_t</div>
				<div class="opts">
					<span class="opt-lbl">材料</span>
					<div class="select"><span>无</span><i class="arrow dn"></i></div>
					<span class="opt-lbl">收缩</span>
					<div class="input num">1.004</div>
					<span class="opt-lbl">配置</span>
					<div class="select"><span>默认</span><i class="arrow dn"></i></div>
				</div>
			</div>
		</div>
		<div class="sec">
			<div class="sec-head"><span>属性</span><svg class="chev" width="12" height="8" viewBox="0 0 12 8"><path d="M1 1l5 5 5-5" stroke="#3a8fc0" stroke-width="2" fill="none"/></svg></div>
		</div>
		<div class="sec">
			<div class="sec-head"><span>设置</span><svg class="chev" width="12" height="8" viewBox="0 0 12 8"><path d="M1 1l5 5 5-5" stroke="#3a8fc0" stroke-width="2" fill="none"/></svg></div>
		</div>
		<div class="collapse"><i class="arrow up big"></i></div>
		<div class="dlg-btns">
			<span class="btn ok">确定</span>
			<span class="btn">取消</span>
		</div>
	</div>
	<svg class="red-arrows" width="150" height="70" viewBox="325 390 150 70">
		<path d="M330 422L390 397 386 392 407 395 393 408 391 403z"/>
		<path d="M344 421L445 416V412L461 420 445 427V424z"/>
		<path d="M342 424L421 442 420 437 434 447 417 452 418 448z"/>
	</svg>
</div>

<!-- site watermark -->
<div class="banner">
	<span class="b-9sug">9SUG</span>
	<span class="b-site">学UG就上UG网</span>
</div>

</div>
</body>
</html>
```

FILE: styles.css
```css
* {
	box-sizing: border-box;
}

html, body {
	margin: 0;
	padding: 0;
}

body {
	background: #fff;
	color: #222;
	font: 12px "Noto Sans", "Noto Sans CJK SC", sans-serif;
}

svg {
	display: block;
	flex: none;
}

.app {
	position: relative;
	width: 802px;
	height: 614px;
	overflow: hidden;
	display: flex;
	flex-direction: column;
}

.arrow {
	display: block;
	flex: none;
	width: 0;
	height: 0;
	border-left: 4px solid transparent;
	border-right: 4px solid transparent;
}

.arrow.dn {
	border-top: 4px solid #222;
}

.arrow.up {
	border-bottom: 5px solid #222;
}

.arrow.up.pale {
	border-bottom-color: #ccc;
}

/* top bar */
.topbar {
	height: 26px;
	display: flex;
	align-items: center;
	justify-content: space-between;
}

.quick {
	display: flex;
	align-items: center;
	padding-left: 143px;
}

.qi.copy {
	margin-left: 7px;
}

.qi.paste {
	margin-left: 6px;
}

.qsep {
	width: 1px;
	height: 18px;
	background: #d8d8d8;
	margin: 0 3px 0 4px;
}

.qi.doc {
	margin: 0 9px 0 2px;
}

.qi.win {
	margin-left: 4px;
}

.qi.more {
	margin-left: 3px;
}

.qtext {
	font-size: 11px;
	margin: 0 2px 0 1px;
}

.apptitle {
	width: 206px;
	font-size: 12.500px;
	color: #111;
	white-space: nowrap;
	overflow: hidden;
}

/* tabs */
.tabs {
	height: 28px;
	background: #c7d6d4;
	display: flex;
	align-items: stretch;
	font-size: 13px;
}

.tab {
	padding: 5px 0 0;
	width: 52px;
	text-align: center;
	color: #222;
	white-space: nowrap;
}

.tab-file {
	width: 62px;
	background: #5f8a82;
}

.tab-hidden {
	width: 73px;
	text-align: right;
	padding-right: 12px;
}

.tab-apps {
	width: 78px;
}

.tab.active {
	width: 91px;
	margin-top: 1px;
	padding-top: 4px;
	background: #fff;
	color: #3a8fc0;
}

/* ribbon */
.ribbon {
	height: 93px;
	display: flex;
	border-bottom: 1px solid #ddd;
}

.rgroup {
	flex: none;
	display: flex;
	flex-direction: column;
	padding-top: 5px;
	margin-bottom: 4px;
	border-right: 1px solid #dcdcdc;
}

.rg-first {
	width: 73px;
}

.rbig-cut {
	margin: 36px 0 0 7px;
	font-size: 11px;
	white-space: nowrap;
	text-align: right;
	width: 57px;
	overflow: hidden;
}

.rg-check {
	width: 167px;
}

.rg-main {
	width: 287px;
	padding-left: 4px;
}

.rg-tool {
	width: 275px;
	border-right: 0;
	padding-left: 4px;
}

.rcontent {
	flex: none;
	height: 66px;
	display: flex;
}

.rg-check .rcontent {
	padding-left: 12px;
}

.rbig {
	width: 66px;
	display: flex;
	flex-direction: column;
	align-items: center;
	font-size: 11px;
	white-space: nowrap;
}

.rbig:nth-child(2) {
	width: 54px;
	margin-left: 3px;
}

.rbig svg {
	margin-bottom: 4px;
}

.rsmall {
	display: flex;
	flex-direction: column;
	gap: 7px;
	margin: -1px 0 0 5px;
}

.igrid {
	display: grid;
	grid-template-columns: repeat(8, 33px);
	grid-auto-rows: 33px;
	align-items: center;
	justify-items: center;
	border: 1px solid #ddd;
	height: 66px;
}

.rg-main .igrid {
	width: 263px;
}

.rg-tool .igrid {
	width: 271px;
	border-right: 0;
}

.ic {
	width: 24px;
	height: 24px;
	margin: -3px 0 0 -3px;
}

.axis {
	font: bold 7px "Liberation Sans", sans-serif;
	fill: #333;
}

.rscroll {
	width: 16px;
	margin-left: 1px;
	display: flex;
	flex-direction: column;
	align-items: center;
	gap: 17px;
	padding-top: 8px;
}

.rlabel {
	position: relative;
	height: 18px;
	display: flex;
	align-items: center;
	justify-content: center;
	font-size: 11px;
	line-height: 10px;
	color: #3a8fc0;
	padding-top: 8px;
	white-space: nowrap;
}

.rg-check .rlabel {
	padding-right: 17px;
}

.rg-main .rlabel {
	padding-right: 21px;
}

.rg-tool .rlabel {
	padding-left: 122px;
}

.glabel-arrow {
	position: absolute;
	right: 7px;
	top: 12px;
}

/* selection bar */
.selbar {
	height: 32px;
	display: flex;
	align-items: center;
	padding-left: 10px;
	border-bottom: 1px solid #aaa;
	font-size: 11px;
	white-space: nowrap;
}

.menu-btn {
	flex: none;
	display: flex;
	align-items: center;
	gap: 3px;
}

.bar-sep {
	width: 1px;
	height: 20px;
	background: #ddd;
	margin: 0 12px 0 8px;
}

.combo {
	flex: none;
	height: 20px;
	border: 1px solid #aaa;
	display: flex;
	align-items: center;
	justify-content: space-between;
	padding: 0 5px 0 2px;
}

.combo-filter {
	width: 132px;
	margin-right: 10px;
}

.combo-scope {
	width: 140px;
}

.bar-icons {
	flex: none;
	display: grid;
	grid-template-columns: 26px 26px 16px 18px 24px 22px 28px 10px 26px 26px 24px 26px 24px 26px 22px 30px 20px 32px;
	align-items: center;
	justify-items: center;
	margin-left: 3px;
}

.bi-active {
	width: 16px;
	height: 16px;
	border: 1px solid #c84040;
	display: flex;
	align-items: center;
	justify-content: center;
}

/* main area */
.main {
	flex: 1;
	min-height: 0;
	display: flex;
}

.rail {
	width: 32px;
	background: #dcdcdc;
	border-right: 1px solid #aaa;
	display: grid;
	grid-template-rows: 39px 44px 42px 45px 44px 62px 44px 64px 24px 50px;
}

.rail-item {
	display: flex;
	align-items: center;
	justify-content: center;
}

.rail-item:first-child {
	padding-bottom: 13px;
}

.rail-item.on {
	background: #fff;
	margin: 0 -1px 0 2px;
	border: 1px solid #aaa;
	border-right: 0;
	position: relative;
}

.nav {
	width: 195px;
	display: flex;
	flex-direction: column;
	background: #fff;
	padding-left: 7px;
}

.nav-head {
	height: 30px;
	display: flex;
	align-items: center;
	justify-content: space-between;
	padding: 0 15px 0 3px;
	color: #333;
}

.maxbox {
	width: 12px;
	height: 11px;
	border: 1px solid #222;
	border-top-width: 2px;
}

.tree {
	flex: 1;
	width: 179px;
	border: 1px solid #ddd;
	padding: 1px;
	overflow: hidden;
}

.tree-head {
	height: 20px;
	background: #efefef;
	display: flex;
	align-items: center;
	padding-left: 5px;
	gap: 17px;
	color: #333;
}

.tree-body {
	position: relative;
}

.tree-lines {
	position: absolute;
	left: 0;
	top: 0;
}

.row {
	position: relative;
	height: 20px;
	display: flex;
	align-items: center;
	padding-left: 4px;
	border-bottom: 1px solid #e8e8e8;
	color: #222;
}

.row:nth-child(n+7):nth-child(even) {
	background: #f9f9f9;
}

.twist {
	width: 9px;
	height: 9px;
	border: 1px solid #ccc;
	background: #fff;
	display: flex;
	align-items: center;
	justify-content: center;
	font: normal 9px/1 "Liberation Sans", sans-serif;
	color: #111;
}

.twist.none {
	visibility: hidden;
}

.ti {
	margin: 0 3px 0 5px;
}

.tchk {
	margin-left: 6px;
}

.tcam {
	margin: 0 3px;
}

.row-solid {
	padding-left: 39px;
}

.tsolid {
	margin: 0 3px 0 2px;
}

.row b {
	font-weight: 700;
}

.view {
	flex: 1;
	margin-left: 1px;
	border-left: 2px solid #f09a50;
	border-top: 2px solid #f09a50;
	background: linear-gradient(#b4b5b7, #e3e5e6);
	overflow: hidden;
}

/* model drawing */
.plate {
	fill: #ffdc6c;
	stroke: #f4a04e;
	stroke-width: 4;
}

.band {
	fill: none;
	stroke: #f4a04e;
	stroke-width: 6;
}

.band-line {
	fill: none;
	stroke: #a87430;
	stroke-width: 1.500;
}

.rib {
	fill: none;
	stroke: #f6a552;
	stroke-width: 3;
}

.rib.thin {
	stroke-width: 2.500;
}

.rib-blob {
	fill: #f6a552;
}

.slot-rim, .slot-dark, .slot-gray {
	fill: none;
	stroke-linecap: round;
}

.slot-rim {
	stroke: #f6a552;
	stroke-width: 11;
}

.slot-rim.wide {
	stroke-width: 15;
}

.slot-dark {
	stroke: #7a5420;
	stroke-width: 3;
}

.slot-dark.wide {
	stroke-width: 8;
}

.slot-gray {
	stroke: #cfd2d8;
	stroke-width: 8;
}

.slot-gray.thin {
	stroke-width: 5;
}

.boss .rim {
	fill: #f4a04e;
}

.boss .side {
	fill: #8a5c22;
}

.boss .top {
	fill: #f4b060;
}

.boss .well {
	fill: #5e3e14;
}

.datum {
	stroke-width: 1;
}

.wcs {
	font-size: 13px;
}

.wcs-z {
	fill: #1a50e8;
}

.wcs-x {
	fill: #e04848;
}

/* dialog */
.dialog {
	position: absolute;
	left: 274px;
	top: 197px;
	width: 329px;
	height: 382px;
	background: #e6e6e6;
	border: 1px solid #b0b0b0;
	border-top: 0;
}

.dlg-title {
	height: 24px;
	margin: 0 -1px;
	background: #5f8a82;
	color: #fff;
	font-size: 13px;
	display: flex;
	align-items: center;
	padding: 0 10px 0 8px;
}

.dlg-title span {
	flex: 1;
	margin-left: 9px;
}

.t-reset {
	margin-right: 8px;
}

.dlg-body {
	padding: 4px 6px 0 5px;
}

.sec {
	background: #fff;
	border-bottom: 1px solid #ccc;
	margin-bottom: 4px;
}

.sec-head {
	height: 22px;
	display: flex;
	align-items: center;
	justify-content: space-between;
	padding: 0 5px 0 7px;
	color: #3a8fc0;
	font-size: 14px;
}

.sec-head.tall {
	height: 26px;
}

.form {
	padding: 8px 9px 0;
	height: 185px;
}

.lbl {
	display: block;
	height: 16px;
	line-height: 16px;
	color: #222;
}

.lbl.first {
	margin-bottom: 3px;
}

.path-row {
	display: flex;
	gap: 2px;
	align-items: center;
	height: 24px;
	margin-bottom: 5px;
}

.input {
	border: 1px solid #aaa;
	background: #fff;
	padding: 0 4px;
	display: flex;
	align-items: center;
	height: 22px;
	color: #333;
	white-space: nowrap;
}

.grow {
	flex: 1;
}

.browse {
	width: 24px;
	height: 24px;
	border: 1px solid #bbb;
	display: flex;
	align-items: center;
	justify-content: center;
}

.name {
	height: 23px;
	margin-top: 4px;
	margin-bottom: 2px;
}

.opts {
	display: grid;
	grid-template-columns: 157px 1fr;
	grid-template-rows: 24px 24px 24px;
	row-gap: 2px;
	align-items: stretch;
}

.opt-lbl {
	display: flex;
	align-items: center;
	color: #222;
}

.select {
	border: 1px solid #aaa;
	display: flex;
	align-items: center;
	justify-content: space-between;
	padding: 0 6px 0 4px;
	color: #333;
}

.num {
	width: 82px;
	height: 23px;
	margin-top: 1px;
	justify-self: end;
}

.collapse {
	height: 15px;
	margin-top: -1px;
	display: flex;
	align-items: center;
	justify-content: center;
	border-bottom: 1px solid #ccc;
}

.arrow.big {
	border-left-width: 5px;
	border-right-width: 5px;
}

.dlg-btns {
	display: flex;
	justify-content: flex-end;
	gap: 5px;
	padding: 8px 9px 0 0;
}

.btn {
	width: 54px;
	height: 25px;
	background: #c9cacc;
	border: 1px solid #aaa;
	display: flex;
	align-items: center;
	justify-content: center;
	color: #333;
}

.btn.ok {
	background: #9ccbe8;
	border-color: #3a9ad0;
}

.red-arrows {
	position: absolute;
	left: 50px;
	top: 193px;
}

.red-arrows path {
	fill: #f73a3a;
}

/* watermark */
.banner {
	position: absolute;
	left: 5px;
	top: 5px;
	width: 150px;
	height: 150px;
	background: #fe0000;
	clip-path: polygon(0 0, 100% 0, 0 100%);
}

.banner span {
	position: absolute;
	white-space: nowrap;
	transform: translate(-50%, -50%) rotate(-41deg);
}

.b-9sug {
	left: 32px;
	top: 33px;
	font: 27px "Liberation Sans", sans-serif;
	color: #000;
}

.b-site {
	left: 64px;
	top: 70px;
	font: bold 23px "Liberation Sans", "Noto Sans CJK SC", sans-serif;
	color: #fff;
}
```
